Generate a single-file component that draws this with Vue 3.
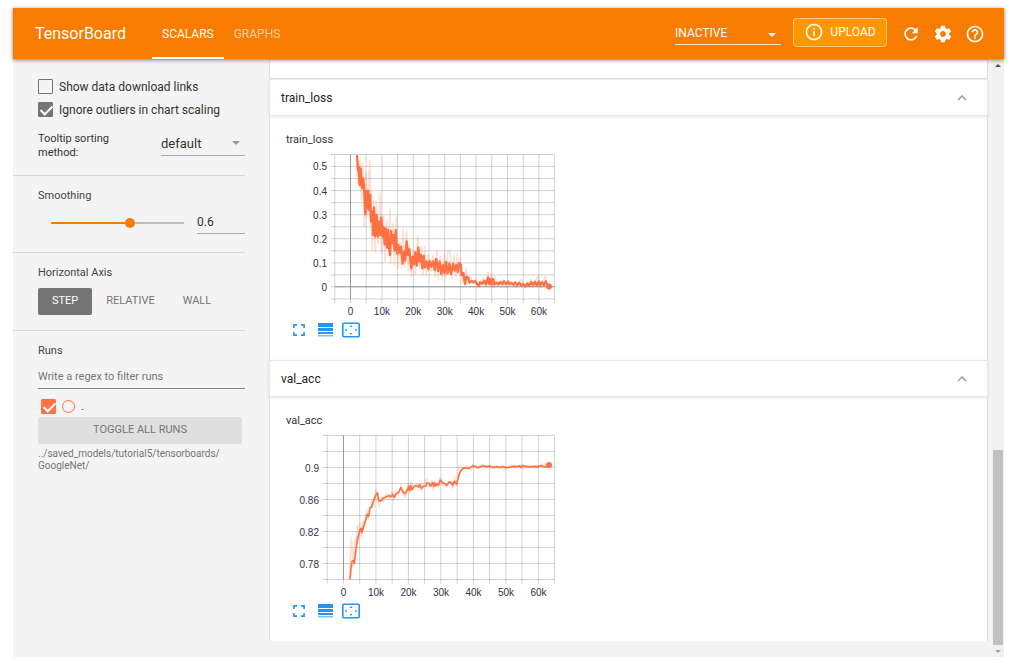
<template>
  <div class="page">
    <div class="app">
      <header class="topbar">
        <h1 class="brand">TensorBoard</h1>
        <nav class="tabs">
          <button
            v-for="tab in tabs"
            :key="tab"
            class="tab"
            :class="{ active: tab === currentTab }"
            @click="currentTab = tab"
          >{{ tab }}</button>
        </nav>
        <div class="actions">
          <div class="select-box plugin-select">
            <select v-model="plugin" aria-label="Inactive plugins">
              <option>INACTIVE</option>
            </select>
          </div>
          <button class="upload">
            <svg viewBox="0 0 24 24" width="20" height="20">
              <path d="M11 17h2v-6h-2v6zm1-15C6.48 2 2 6.48 2 12s4.48 10 10 10 10-4.48 10-10S17.52 2 12 2zm0 18c-4.41 0-8-3.59-8-8s3.59-8 8-8 8 3.59 8 8-3.59 8-8 8zM11 9h2V7h-2v2z" />
            </svg>
            <span>UPLOAD</span>
          </button>
          <button v-for="a in actions" :key="a.name" class="icon-btn" :aria-label="a.name">
            <svg viewBox="0 0 24 24" width="20" height="20"><path :d="a.path" /></svg>
          </button>
        </div>
      </header>

      <div class="content">
        <aside class="sidebar">
          <section class="group options">
            <label class="check">
              <input type="checkbox" v-model="showLinks" />
              <span>Show data download links</span>
            </label>
            <label class="check">
              <input type="checkbox" v-model="ignoreOutliers" />
              <span>Ignore outliers in chart scaling</span>
            </label>
            <div class="sorting">
              <label for="sorting">Tooltip sorting method:</label>
              <div class="select-box sort-select">
                <select id="sorting" v-model="sorting">
                  <option>default</option>
                  <option>descending</option>
                  <option>ascending</option>
                  <option>nearest</option>
                </select>
              </div>
            </div>
          </section>

          <section class="group smoothing">
            <label class="title" for="smoothing">Smoothing</label>
            <div class="smoothing-row">
              <input
                id="smoothing"
                class="slider"
                type="range"
                min="0"
                max="1"
                step="0.001"
                v-model="smoothing"
                :style="{ '--fill': `${smoothing * 100}%` }"
              />
              <input class="number" type="text" v-model="smoothing" aria-label="Smoothing value" />
            </div>
          </section>

          <section class="group axis">
            <h3 class="title">Horizontal Axis</h3>
            <div class="axis-row">
              <button
                v-for="axis in axes"
                :key="axis"
                class="axis-btn"
                :class="{ active: axis === currentAxis }"
                @click="currentAxis = axis"
              >{{ axis }}</button>
            </div>
          </section>

          <section class="group runs">
            <label class="title" for="regex">Runs</label>
            <input id="regex" class="regex" type="text" placeholder="Write a regex to filter runs" />
            <div class="run">
              <input id="run" type="checkbox" v-model="runOn" />
              <span class="run-dot"></span>
              <label for="run">.</label>
            </div>
            <button class="toggle" @click="runOn = !runOn">TOGGLE ALL RUNS</button>
            <p class="logdir">../saved_models/tutorial5/tensorboards/<wbr />GoogleNet/</p>
          </section>
        </aside>

        <main class="main">
          <div class="cards">
            <div class="card-tail"></div>
            <section v-for="c in charts" :key="c.tag" class="category">
              <button class="card-head">
                <span>{{ c.tag }}</span>
                <svg viewBox="0 0 24 24" width="18" height="18">
                  <path d="M12 8l-6 6 1.41 1.41L12 10.83l4.59 4.58L18 14z" />
                </svg>
              </button>
              <div class="card-body">
                <h4 class="chart-title">{{ c.tag }}</h4>
                <svg class="chart" width="276" height="168" viewBox="0 0 276 168">
                  <g class="grid">
                    <line v-for="x in c.gridX" :key="'x' + x" :x1="x" :x2="x" y1="4.5" :y2="c.bottom + 4" />
                    <line v-for="y in c.gridY" :key="'y' + y" :x1="c.left - 4" x2="268.5" :y1="y" :y2="y" />
                  </g>
                  <g class="zero">
                    <line :x1="c.zeroX" :x2="c.zeroX" y1="4.5" :y2="c.bottom" />
                    <line v-if="c.zeroY" :x1="c.left" x2="268.5" :y1="c.zeroY" :y2="c.zeroY" />
                  </g>
                  <text
                    v-for="t in c.ticksX"
                    :key="t.text"
                    :x="t.at"
                    y="165"
                    text-anchor="middle"
                  >{{ t.text }}</text>
                  <text
                    v-for="t in c.ticksY"
                    :key="t.text"
                    :x="c.left - 8"
                    :y="t.at + 4"
                    text-anchor="end"
                  >{{ t.text }}</text>
                  <!-- curves are stored at three units per pixel -->
                  <g transform="scale(0.33333)">
                    <polyline class="raw" :points="c.raw" />
                    <polyline class="smooth" :class="{ thin: c.thin }" :points="c.smooth" />
                  </g>
                  <circle :cx="c.end[0]" :cy="c.end[1]" r="3" class="end" />
                </svg>
                <div class="tools">
                  <button aria-label="Expand">
                    <svg viewBox="0 0 18 16" width="18" height="16">
                      <path class="line" d="M3.9 6V2.9H7M11 2.9h3.1V6M14.1 10v3.1H11M7 13.1H3.9V10" />
                    </svg>
                  </button>
                  <button aria-label="Toggle log scale">
                    <svg viewBox="0 0 18 16" width="18" height="16">
                      <path d="M2 1h15v4H2zM2 6h15v3H2zM2 10h15v2H2z" />
                      <path d="M2 13h15v1.500H2z" opacity=".6" />
                    </svg>
                  </button>
                  <button aria-label="Fit domain to data">
                    <svg viewBox="0 0 18 16" width="18" height="16">
                      <rect class="line" x=".8" y="1.200" width="16.400" height="13.600" rx="1" />
                      <path d="M9 3l1.500 2h-3zM9 13l1.500-2h-3zM2.700 8l2-1.500v3zM15.300 8l-2-1.500v3z" />
                    </svg>
                  </button>
                </div>
              </div>
            </section>
          </div>
          <div class="scrollbar" aria-hidden="true">
            <i class="arrow up"></i>
            <div class="track"><div class="thumb"></div></div>
            <i class="arrow down"></i>
          </div>
        </main>
      </div>
    </div>
  </div>
</template>

<script setup>
import { ref } from "vue";

const tabs = ["SCALARS", "GRAPHS"];
const currentTab = ref("SCALARS");
const plugin = ref("INACTIVE");

const showLinks = ref(false);
const ignoreOutliers = ref(true);
const sorting = ref("default");
const smoothing = ref(0.6);
const axes = ["STEP", "RELATIVE", "WALL"];
const currentAxis = ref("STEP");
const runOn = ref(true);

const actions = [
  {
    name: "Reload",
    path: "M17.65 6.35C16.2 4.9 14.21 4 12 4c-4.42 0-7.99 3.58-7.99 8s3.57 8 7.99 8c3.73 0 6.84-2.55 7.73-6h-2.08c-.82 2.33-3.04 4-5.65 4-3.31 0-6-2.69-6-6s2.69-6 6-6c1.66 0 3.14.69 4.22 1.78L13 11h7V4l-2.35 2.35z",
  },
  {
    name: "Settings",
    path: "M19.43 12.98c.04-.32.07-.64.07-.98s-.03-.66-.07-.98l2.11-1.65c.19-.15.24-.42.12-.64l-2-3.46c-.12-.22-.39-.3-.61-.22l-2.49 1c-.52-.4-1.08-.73-1.69-.98l-.38-2.65C14.46 2.18 14.25 2 14 2h-4c-.25 0-.46.18-.49.42l-.38 2.65c-.61.25-1.17.59-1.69.98l-2.49-1c-.23-.09-.49 0-.61.22l-2 3.46c-.13.22-.07.49.12.64l2.11 1.65c-.04.32-.07.65-.07.98s.03.66.07.98l-2.11 1.65c-.19.15-.24.42-.12.64l2 3.46c.12.22.39.3.61.22l2.49-1c.52.4 1.08.73 1.69.98l.38 2.65c.03.24.24.42.49.42h4c.25 0 .46-.18.49-.42l.38-2.65c.61-.25 1.17-.59 1.69-.98l2.49 1c.23.09.49 0 .61-.22l2-3.46c.12-.22.07-.49-.12-.64l-2.11-1.65zM12 15.500c-1.930 0-3.500-1.570-3.500-3.500s1.570-3.500 3.500-3.500 3.500 1.570 3.500 3.500-1.570 3.500-3.500 3.500z",
  },
  {
    name: "Help",
    path: "M11 18h2v-2h-2v2zm1-16C6.48 2 2 6.48 2 12s4.48 10 10 10 10-4.48 10-10S17.52 2 12 2zm0 18c-4.41 0-8-3.59-8-8s3.59-8 8-8 8 3.59 8 8-3.59 8-8 8zm0-14c-2.210 0-4 1.790-4 4h2c0-1.100.9-2 2-2s2 .9 2 2c0 2-3 1.750-3 5h2c0-2.250 3-2.500 3-5 0-2.210-1.790-4-4-4z",
  },
];

const range = (from, step, n) => Array.from({ length: n }, (_, i) => from + i * step);
const labelsX = (zero, step) =>
  ["0", "10k", "20k", "30k", "40k", "50k", "60k"].map((text, i) => ({ text, at: zero + i * step }));

const trainSmooth =
  "213,15 216,62 218,50 221,105 224,55 228,115 232,85 235,125 238,192 241,123 244,175 247,123 250,180 253,135 255,215 259,185 261,255 264,172 268,260 272,195 276,260 279,215 283,255 286,203 290,260 293,232 296,283 299,235 303,293 306,240 309,295 312,315 315,243 319,280 322,255 326,302 329,240 334,312 337,285 341,308 345,290 350,341 354,305 358,332 362,274 366,315 370,298 376,355 380,320 384,342 388,307 392,347 397,293 401,334 405,315 409,355 413,318 417,352 422,335 427,358 431,333 436,350 441,334 446,360 450,327 452,332 456,363 461,335 466,372 471,345 476,370 480,336 485,370 490,340 495,372 501,342 506,362 511,345 515,366 519,340 524,343 527,375 532,369 537,402 541,380 546,382 551,398 557,393 562,397 568,394 573,402 578,408 583,396 589,402 595,392 600,404 606,382 610,402 613,387 617,404 621,387 626,403 632,398 638,403 643,396 649,403 654,394 660,402 666,394 671,403 677,399 683,404 688,397 694,405 700,398 705,406 711,402 718,409 724,400 729,408 736,396 741,406 747,395 753,407 758,394 763,405 768,396 774,406 779,394 784,405 789,409";
const trainRaw =
  "213,15 215,105 223,30 226,150 230,40 235,230 239,65 244,200 248,60 250,200 252,30 255,220 259,300 263,150 268,305 271,155 276,280 282,130 287,310 292,200 297,335 302,210 307,290 312,178 314,340 320,220 326,345 331,200 335,355 343,280 347,355 351,238 356,350 362,238 367,365 371,285 376,380 383,300 388,375 395,260 401,355 406,288 411,375 416,290 421,375 427,315 435,365 441,315 447,380 453,300 457,390 463,320 468,390 475,310 480,385 485,305 492,300 497,385 504,315 509,380 514,310 519,370 523,325 529,400 540,355 545,402 553,380 560,400 570,385 580,412 590,385 600,408 606,366 611,408 616,370 622,412 627,380 635,408 650,390 660,410 675,395 690,412 705,388 720,413 735,388 740,412 757,376 764,412 778,378 784,414 789,409";
const valSmooth =
  "192,445 195,411 198,391 202,388 205,397 208,370 211,350 215,322 219,309 222,296 226,292 228,305 233,286 239,268 244,250 248,255 252,230 257,228 262,211 269,194 274,186 278,209 285,210 290,202 296,200 304,196 310,194 316,197 320,190 325,199 331,188 338,184 345,170 351,183 357,188 364,178 368,166 371,179 374,164 378,176 384,166 391,163 398,168 402,161 406,172 413,166 420,165 422,156 429,157 434,166 440,154 443,166 446,156 449,165 453,158 458,162 463,147 468,154 476,158 482,163 489,153 496,155 500,163 505,151 512,159 517,139 522,124 531,112 540,111 550,112 561,104 569,107 576,110 583,107 592,104 600,107 611,105 622,109 634,107 642,110 648,106 661,110 670,109 682,106 692,107 701,105 705,110 709,104 721,106 732,108 744,106 754,107 766,104 777,108 789,101";
const valRaw =
  "190,445 196,320 201,410 206,325 210,350 214,285 218,330 222,275 227,320 230,270 235,290 242,238 248,265 257,208 262,225 270,175 275,190 279,228 284,198 291,210 303,188 311,202 319,180 323,208 330,180 337,190 345,162 352,190 358,198 368,155 371,188 376,152 382,176 398,160 406,180 414,158 422,144 430,168 436,150 442,178 446,150 456,169 463,138 470,162 483,168 492,150 500,172 507,140 512,165 519,105 530,112 544,105 557,115 562,100 576,114 590,101 606,110 622,112 638,105 655,115 674,103 690,110 706,100 711,114 730,104 750,111 768,100 789,101";

const charts = [
  {
    tag: "train_loss",
    left: 49,
    bottom: 149,
    zeroX: 64.5,
    zeroY: 136.7,
    gridX: range(48.8, 15.7, 15),
    gridY: range(4.5, 12.04, 13),
    ticksX: labelsX(64.5, 31.4),
    ticksY: ["0.5", "0.4", "0.3", "0.2", "0.1", "0"].map((text, i) => ({ text, at: 16.4 + i * 24.1 })),
    smooth: trainSmooth,
    raw: trainRaw,
    end: [263, 136.500],
    thin: false,
  },
  {
    tag: "val_acc",
    left: 41,
    bottom: 148.5,
    zeroX: 57.5,
    zeroY: null,
    gridX: range(41.2, 16.24, 15),
    gridY: range(4.5, 16, 10),
    ticksX: labelsX(57.5, 32.5),
    ticksY: ["0.9", "0.86", "0.82", "0.78"].map((text, i) => ({ text, at: 36.5 + i * 32 })),
    smooth: valSmooth,
    raw: valRaw,
    end: [263, 34],
    thin: true,
  },
];
</script>

<style>
body {
  margin: 0;
  background: #fff;
}
</style>

<style scoped>
.page {
  box-sizing: border-box;
  display: flex;
  min-height: 100vh;
  padding: 8px 13px 12px;
  font-family: Roboto, "Liberation Sans", sans-serif;
  color: #333;
}

.page * {
  box-sizing: border-box;
}

button,
input,
select {
  margin: 0;
  padding: 0;
  border: none;
  outline: none;
  background: none;
  font-family: inherit;
  color: inherit;
}

button {
  cursor: pointer;
}

svg {
  display: block;
  fill: currentColor;
}

h1,
h3,
h4,
p {
  margin: 0;
  font-weight: 400;
}

.app {
  flex: 1;
  display: flex;
  flex-direction: column;
  background: #f4f4f4;
}

/* header */
.topbar {
  position: relative;
  z-index: 1;
  display: flex;
  align-items: stretch;
  height: 51px;
  padding: 0 19px 0 22px;
  background: #f77c00;
  box-shadow: 0 1px 4px rgba(0, 0, 0, 0.5);
  color: #fff;
}

.brand {
  width: 117px;
  font-size: 16px;
  line-height: 51px;
}

.tabs {
  display: flex;
}

.tab {
  padding: 0 10px;
  border-bottom: 2px solid transparent;
  border-top: 2px solid transparent;
  font-size: 12px;
  color: rgba(255, 255, 255, 0.65);
}

.tab.active {
  border-bottom-color: #fff;
  color: #fff;
}

.actions {
  display: flex;
  align-items: center;
  gap: 12px;
  margin-left: auto;
}

.select-box {
  position: relative;
}

.select-box select {
  display: block;
  width: 100%;
  appearance: none;
  cursor: pointer;
}

.select-box::after {
  content: "";
  position: absolute;
  right: 5px;
  top: 10px;
  border: 4px solid transparent;
  border-top-color: currentColor;
  border-bottom: none;
  pointer-events: none;
}

.plugin-select {
  width: 106px;
}

.plugin-select select {
  height: 22px;
  border-bottom: 1px solid rgba(255, 255, 255, 0.8);
  font-size: 12px;
}

.plugin-select option {
  color: #333;
}

.upload {
  display: flex;
  align-items: center;
  justify-content: center;
  gap: 6px;
  width: 94px;
  height: 29px;
  margin: 0 2px 3px 0;
  border: 1px solid #ffc677;
  border-radius: 3px;
  background: #ff9800;
  font-size: 12px;
}

/* sidebar */
.content {
  flex: 1;
  display: flex;
}

.sidebar {
  flex: none;
  width: 256px;
  padding-right: 24px;
}

.group {
  padding-left: 25px;
  border-bottom: 1px solid #d8d8d8;
}

.group:last-child {
  border-bottom: none;
}

.options {
  height: 117px;
  padding-top: 16px;
}

.check {
  display: flex;
  align-items: center;
  gap: 6px;
  height: 23px;
  font-size: 12px;
}

input[type="checkbox"] {
  position: relative;
  flex: none;
  width: 15px;
  height: 15px;
  border: 1px solid #757575;
  border-radius: 1px;
  appearance: none;
}

input[type="checkbox"]:checked {
  background: #757575;
}

input[type="checkbox"]:checked::after {
  content: "";
  position: absolute;
  left: 4px;
  top: 0;
  width: 5px;
  height: 10px;
  border: solid #fff;
  border-width: 0 2px 2px 0;
  transform: rotate(45deg);
}

.sorting {
  display: flex;
  justify-content: space-between;
  margin-top: 10px;
  font-size: 11px;
  line-height: 14px;
}

.sorting label {
  width: 90px;
  padding-top: 1px;
}

.sort-select {
  width: 84px;
  color: #333;
}

.sort-select::after {
  border-top-color: #999;
}

.sort-select select {
  height: 25px;
  border-bottom: 1px solid #aaa;
  font-size: 13px;
}

.title {
  display: block;
  font-size: 11px;
  line-height: 14px;
  color: #444;
}

.smoothing {
  height: 77px;
  padding-top: 13px;
}

.smoothing-row {
  display: flex;
  align-items: center;
  justify-content: space-between;
  padding-left: 13px;
  margin-top: 8px;
}

.slider {
  width: 133px;
  height: 12px;
  appearance: none;
  background: linear-gradient(to right, #f77c00 var(--fill), #bdbdbd var(--fill)) center / 100% 2px no-repeat;
}

.slider::-webkit-slider-thumb {
  width: 10px;
  height: 10px;
  border-radius: 50%;
  appearance: none;
  background: #f77c00;
}

.number {
  width: 48px;
  height: 23px;
  border-bottom: 1px solid #aaa;
  font-size: 12px;
}

.axis {
  height: 78px;
  padding-top: 13px;
}

.axis-row {
  display: flex;
  margin-top: 8px;
}

.axis-btn {
  height: 27px;
  padding: 0 14px 3px;
  border-radius: 2px;
  font-size: 11px;
  color: #757575;
}

.axis-btn.active {
  background: #757575;
  color: #fff;
}

.runs {
  padding-top: 13px;
}

.regex {
  display: block;
  width: 100%;
  height: 24px;
  margin-top: 7px;
  border-bottom: 1px solid #888;
  font-size: 11px;
}

.regex::placeholder {
  color: #777;
  opacity: 1;
}

.run {
  display: flex;
  align-items: center;
  gap: 6px;
  height: 28px;
  padding: 6px 0 0 3px;
  font-size: 11px;
}

.run input:checked {
  border-color: #ff7043;
  background: #ff7043;
}

.run-dot {
  width: 13px;
  height: 13px;
  border: 1px solid #ff7043;
  border-radius: 50%;
}

.toggle {
  display: block;
  width: 204px;
  height: 27px;
  padding-bottom: 2px;
  border-radius: 2px;
  background: #dfdfdf;
  font-size: 11px;
  color: #757575;
}

.logdir {
  margin-top: 4px;
  font-size: 10px;
  line-height: 12px;
  color: #757575;
}

/* charts */
.main {
  flex: 1;
  display: flex;
  min-width: 0;
}

.cards {
  flex: 1;
  margin-right: 4px;
}

.card-tail {
  height: 20px;
  border: 1px solid #e0e0e0;
  background: #fff;
}

.card-head {
  display: flex;
  align-items: center;
  justify-content: space-between;
  position: relative;
  width: 100%;
  height: 37px;
  padding: 0 16px 0 11px;
  background: #fff;
  border: 1px solid #e8e8e8;
  box-shadow: 0 1px 3px rgba(0, 0, 0, 0.1);
  font-size: 12px;
  color: #222;
}

.card-head svg {
  color: #999;
}

.card-body {
  padding: 16px 16px 22px;
  border: solid #e0e0e0;
  border-width: 0 1px;
  background: #fff;
}

.chart-title {
  font-size: 11px;
  line-height: 16px;
}

.chart {
  margin-top: 2px;
}

.chart text {
  font-family: "Liberation Sans", Arial, sans-serif;
  font-size: 10px;
  fill: #32313f;
}

.grid line {
  stroke: #000;
  stroke-opacity: 0.18;
}

.zero line {
  stroke: #999;
}

polyline {
  fill: none;
  stroke: #ff7043;
  stroke-linejoin: round;
}

.raw {
  stroke-width: 5px;
  stroke-opacity: 0.22;
}

.smooth {
  stroke-width: 7px;
}

.smooth.thin {
  stroke-width: 5px;
}

.end {
  fill: #ff7043;
}

.tools {
  display: flex;
  gap: 8px;
  margin-top: 4px;
  padding-left: 4px;
  color: #2196f3;
}

.tools .line {
  fill: none;
  stroke: currentColor;
  stroke-width: 1.6px;
}

/* scrollbar */
.scrollbar {
  flex: none;
  display: flex;
  flex-direction: column;
  align-items: center;
  width: 12px;
  padding: 5px 0 4px;
  background: #f0f0f0;
}

.track {
  flex: 1;
  display: flex;
  flex-direction: column;
  justify-content: flex-end;
  width: 10px;
  margin: 4px 0 5px;
}

.thumb {
  height: 34%;
  background: #c1c1c1;
}

.arrow {
  border: 3px solid transparent;
}

.arrow.up {
  border-top: none;
  border-bottom-color: #505050;
}

.arrow.down {
  border-bottom: none;
  border-top-color: #a3a3a3;
}
</style>
